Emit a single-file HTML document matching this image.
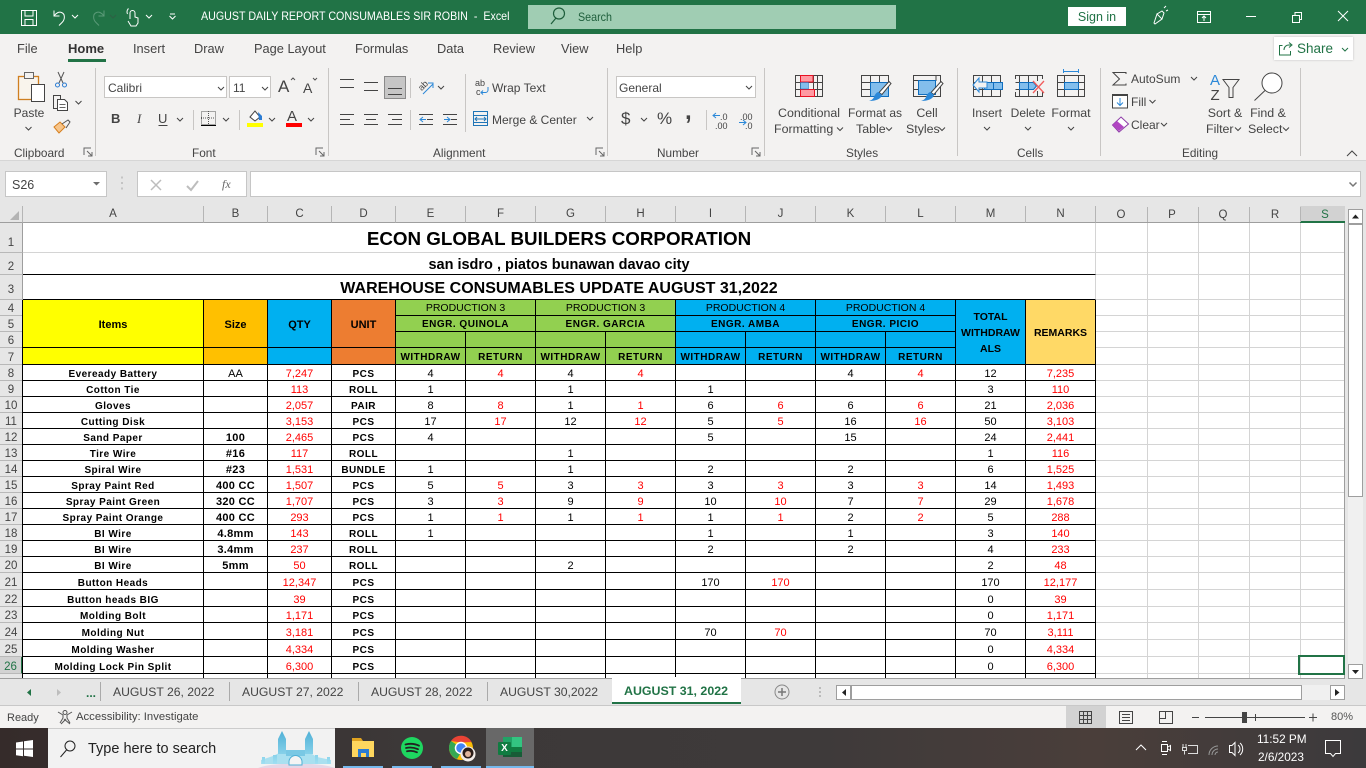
<!DOCTYPE html>
<html><head><meta charset="utf-8"><title>AUGUST DAILY REPORT CONSUMABLES SIR ROBIN - Excel</title>
<style>
html,body{margin:0;padding:0;width:1366px;height:768px;overflow:hidden;background:#fff;font-family:"Liberation Sans",sans-serif}
.p{position:absolute}
.t{position:absolute;white-space:pre;line-height:14px;font-size:12.5px;color:#444}
.c{transform:translateX(-50%)}
.w{color:#fff}
#grid{position:absolute;left:0;top:206px;width:1096px;height:472px;overflow:hidden}
table{border-collapse:separate;border-spacing:0;table-layout:fixed;width:1096px}
td,th{padding:0;box-sizing:border-box;text-align:center;overflow:visible;white-space:nowrap;line-height:11px}
td{border-right:1px solid #000;border-bottom:1px solid #000;font-size:11px;color:#000}
th{background:#e6e6e6;font-weight:normal;color:#444;font-size:11.5px;border-right:1px solid #9e9e9e;border-bottom:1px solid #b8b8b8}
.ch th{border-right:1px solid #b5b5b5;border-bottom:1px solid #9e9e9e}
.m td{border-right:1px solid #d4d4d4;font-weight:bold}
.m th{vertical-align:bottom}
.h td{font-weight:bold;font-size:10.5px;line-height:13px;padding-top:2px}
.h th,.v th{padding-top:4px}
.r7 td{padding-top:3px}
.e td{font-size:10px;letter-spacing:.5px}
.y{background:#ff0}.o{background:#ffc000}.b{background:#00b0f0}.u{background:#ed7d31}.g{background:#92d050}.k{background:#ffd966}
.d td,.d th{padding-top:4px}
.d td:nth-child(2),.d td:nth-child(5){font-weight:bold;font-size:10px;letter-spacing:.45px}
.d td:nth-child(4),.d td:nth-child(7),.d td:nth-child(9),.d td:nth-child(11),.d td:nth-child(13),.d td:nth-child(15){color:#f00}
.s td:nth-child(3){font-weight:bold;letter-spacing:.3px}
svg{position:absolute;left:0;top:0;pointer-events:none}
</style></head><body>
<!-- chrome backgrounds -->
<div class="p" style="left:0;top:0;width:1366px;height:34px;background:#217346"></div>
<div class="p" style="left:0;top:34px;width:1366px;height:126px;background:#f3f2f1"></div>
<div class="p" style="left:0;top:160px;width:1366px;height:46px;background:#e6e6e6;border-top:1px solid #d6d6d6;box-sizing:border-box"></div>
<div class="p" style="left:528px;top:5px;width:368px;height:24px;background:#a0cdb3"></div>
<div class="p" style="left:1068px;top:7px;width:58px;height:19px;background:#fff"></div>
<div class="p" style="left:1274px;top:37px;width:79px;height:23px;background:#fff;box-shadow:0 0 2px #bbb"></div>
<!-- ribbon inputs -->
<div class="p" style="left:104px;top:76px;width:123px;height:22px;background:#fff;border:1px solid #c8c6c4;box-sizing:border-box"></div>
<div class="p" style="left:229px;top:76px;width:42px;height:22px;background:#fff;border:1px solid #c8c6c4;box-sizing:border-box"></div>
<div class="p" style="left:616px;top:76px;width:140px;height:22px;background:#fff;border:1px solid #c8c6c4;box-sizing:border-box"></div>
<div class="p" style="left:384px;top:76px;width:22px;height:23px;background:#c6c6c6;border:1px solid #8a8a8a;box-sizing:border-box"></div>
<!-- formula bar -->
<div class="p" style="left:5px;top:171px;width:102px;height:26px;background:#fff;border:1px solid #c6c6c6;box-sizing:border-box"></div>
<div class="p" style="left:137px;top:171px;width:110px;height:26px;background:#fff;border:1px solid #c6c6c6;box-sizing:border-box"></div>
<div class="p" style="left:250px;top:171px;width:1111px;height:26px;background:#fff;border:1px solid #c6c6c6;box-sizing:border-box"></div>
<!-- sheet right -->
<div class="p" style="left:1096px;top:206px;width:249px;height:17px;background:#e6e6e6;border-bottom:1px solid #9e9e9e;box-sizing:border-box"></div>
<div class="p" style="left:1300px;top:206px;width:45px;height:17px;background:#d2d2d2;border-bottom:2px solid #217346;box-sizing:border-box"></div>
<div class="p" style="left:1345px;top:206px;width:21px;height:472px;background:#e6e6e6"></div>
<div class="p" style="left:1348px;top:224px;width:15px;height:440px;background:#f0f0f0"></div>
<div id="grid"><table>
<colgroup><col style="width:23px"><col style="width:181px"><col style="width:64px"><col style="width:64px"><col style="width:64px"><col span="10" style="width:70px"></colgroup>
<tr class="ch" style="height:17px"><th></th><th>A</th><th>B</th><th>C</th><th>D</th><th>E</th><th>F</th><th>G</th><th>H</th><th>I</th><th>J</th><th>K</th><th>L</th><th>M</th><th>N</th></tr>
<tr class="m" style="height:30px"><th style="padding-bottom:3px">1</th><td colspan="14" style="font-size:18.8px;line-height:22px;border-bottom-color:#d4d4d4;padding-top:3px">ECON GLOBAL BUILDERS CORPORATION</td></tr>
<tr class="m" style="height:22px"><th style="padding-bottom:1px">2</th><td colspan="14" style="font-size:14.5px;line-height:16px;padding-top:2px">san isdro , piatos bunawan davao city</td></tr>
<tr class="m" style="height:25px"><th style="padding-bottom:3px">3</th><td colspan="14" style="font-size:16px;line-height:18px;vertical-align:bottom;padding-bottom:1px">WAREHOUSE CONSUMABLES UPDATE AUGUST 31,2022</td></tr>
<tr class="h" style="height:16px"><th>4</th><td class="y" rowspan="3" style="font-size:11px;padding-top:4px">Items</td><td class="o" rowspan="3" style="font-size:11px;padding-top:4px">Size</td><td class="b" rowspan="3" style="font-size:11px;padding-top:4px">QTY</td><td class="u" rowspan="3" style="font-size:11px;padding-top:4px">UNIT</td><td class="g" colspan="2" style="font-weight:normal">PRODUCTION 3</td><td class="g" colspan="2" style="font-weight:normal">PRODUCTION 3</td><td class="b" colspan="2" style="font-weight:normal">PRODUCTION 4</td><td class="b" colspan="2" style="font-weight:normal">PRODUCTION 4</td><td class="b" rowspan="4" style="line-height:16px">TOTAL<br>WITHDRAW<br>ALS</td><td class="k" rowspan="4">REMARKS</td></tr>
<tr class="e h" style="height:16px"><th>5</th><td class="g" colspan="2">ENGR. QUINOLA</td><td class="g" colspan="2">ENGR. GARCIA</td><td class="b" colspan="2">ENGR. AMBA</td><td class="b" colspan="2">ENGR. PICIO</td></tr>
<tr class="v" style="height:16px"><th>6</th><td class="g"></td><td class="g"></td><td class="g"></td><td class="g"></td><td class="b"></td><td class="b"></td><td class="b"></td><td class="b"></td></tr>
<tr class="e h r7" style="height:17px"><th style="padding-top:5px">7</th><td class="y"></td><td class="o"></td><td class="b"></td><td class="u"></td><td class="g">WITHDRAW</td><td class="g">RETURN</td><td class="g">WITHDRAW</td><td class="g">RETURN</td><td class="b">WITHDRAW</td><td class="b">RETURN</td><td class="b">WITHDRAW</td><td class="b">RETURN</td></tr>
<tr class="d" style="height:16px"><th>8</th><td>Eveready Battery</td><td>AA</td><td>7,247</td><td>PCS</td><td>4</td><td>4</td><td>4</td><td>4</td><td></td><td></td><td>4</td><td>4</td><td>12</td><td>7,235</td></tr>
<tr class="d" style="height:16px"><th>9</th><td>Cotton Tie</td><td></td><td>113</td><td>ROLL</td><td>1</td><td></td><td>1</td><td></td><td>1</td><td></td><td></td><td></td><td>3</td><td>110</td></tr>
<tr class="d" style="height:16px"><th>10</th><td>Gloves</td><td></td><td>2,057</td><td>PAIR</td><td>8</td><td>8</td><td>1</td><td>1</td><td>6</td><td>6</td><td>6</td><td>6</td><td>21</td><td>2,036</td></tr>
<tr class="d" style="height:16px"><th>11</th><td>Cutting Disk</td><td></td><td>3,153</td><td>PCS</td><td>17</td><td>17</td><td>12</td><td>12</td><td>5</td><td>5</td><td>16</td><td>16</td><td>50</td><td>3,103</td></tr>
<tr class="d s" style="height:16px"><th>12</th><td>Sand Paper</td><td>100</td><td>2,465</td><td>PCS</td><td>4</td><td></td><td></td><td></td><td>5</td><td></td><td>15</td><td></td><td>24</td><td>2,441</td></tr>
<tr class="d s" style="height:16px"><th>13</th><td>Tire Wire</td><td>#16</td><td>117</td><td>ROLL</td><td></td><td></td><td>1</td><td></td><td></td><td></td><td></td><td></td><td>1</td><td>116</td></tr>
<tr class="d s" style="height:16px"><th>14</th><td>Spiral Wire</td><td>#23</td><td>1,531</td><td>BUNDLE</td><td>1</td><td></td><td>1</td><td></td><td>2</td><td></td><td>2</td><td></td><td>6</td><td>1,525</td></tr>
<tr class="d s" style="height:16px"><th>15</th><td>Spray Paint Red</td><td>400 CC</td><td>1,507</td><td>PCS</td><td>5</td><td>5</td><td>3</td><td>3</td><td>3</td><td>3</td><td>3</td><td>3</td><td>14</td><td>1,493</td></tr>
<tr class="d s" style="height:16px"><th>16</th><td>Spray Paint Green</td><td>320 CC</td><td>1,707</td><td>PCS</td><td>3</td><td>3</td><td>9</td><td>9</td><td>10</td><td>10</td><td>7</td><td>7</td><td>29</td><td>1,678</td></tr>
<tr class="d s" style="height:16px"><th>17</th><td>Spray Paint Orange</td><td>400 CC</td><td>293</td><td>PCS</td><td>1</td><td>1</td><td>1</td><td>1</td><td>1</td><td>1</td><td>2</td><td>2</td><td>5</td><td>288</td></tr>
<tr class="d s" style="height:16px"><th>18</th><td>BI Wire</td><td>4.8mm</td><td>143</td><td>ROLL</td><td>1</td><td></td><td></td><td></td><td>1</td><td></td><td>1</td><td></td><td>3</td><td>140</td></tr>
<tr class="d s" style="height:16px"><th>19</th><td>BI Wire</td><td>3.4mm</td><td>237</td><td>ROLL</td><td></td><td></td><td></td><td></td><td>2</td><td></td><td>2</td><td></td><td>4</td><td>233</td></tr>
<tr class="d s" style="height:16px"><th>20</th><td>BI Wire</td><td>5mm</td><td>50</td><td>ROLL</td><td></td><td></td><td>2</td><td></td><td></td><td></td><td></td><td></td><td>2</td><td>48</td></tr>
<tr class="d" style="height:17px"><th>21</th><td>Button Heads</td><td></td><td>12,347</td><td>PCS</td><td></td><td></td><td></td><td></td><td>170</td><td>170</td><td></td><td></td><td>170</td><td>12,177</td></tr>
<tr class="d" style="height:17px"><th>22</th><td>Button heads BIG</td><td></td><td>39</td><td>PCS</td><td></td><td></td><td></td><td></td><td></td><td></td><td></td><td></td><td>0</td><td>39</td></tr>
<tr class="d" style="height:16px"><th>23</th><td>Molding Bolt</td><td></td><td>1,171</td><td>PCS</td><td></td><td></td><td></td><td></td><td></td><td></td><td></td><td></td><td>0</td><td>1,171</td></tr>
<tr class="d" style="height:17px"><th>24</th><td>Molding Nut</td><td></td><td>3,181</td><td>PCS</td><td></td><td></td><td></td><td></td><td>70</td><td>70</td><td></td><td></td><td>70</td><td>3,111</td></tr>
<tr class="d" style="height:17px"><th>25</th><td>Molding Washer</td><td></td><td>4,334</td><td>PCS</td><td></td><td></td><td></td><td></td><td></td><td></td><td></td><td></td><td>0</td><td>4,334</td></tr>
<tr class="d" style="height:17px"><th style="background:#d2d2d2;color:#217346;border-right:2px solid #217346">26</th><td>Molding Lock Pin Split</td><td></td><td>6,300</td><td>PCS</td><td></td><td></td><td></td><td></td><td></td><td></td><td></td><td></td><td>0</td><td>6,300</td></tr>
<tr style="height:17px"><th></th><td></td><td></td><td></td><td></td><td></td><td></td><td></td><td></td><td></td><td></td><td></td><td></td><td></td><td></td></tr>
</table></div>
<!-- tab + status + taskbar backgrounds -->
<div class="p" style="left:0;top:678px;width:1366px;height:28px;background:#e6e6e6;border-top:1px solid #9e9e9e;box-sizing:border-box"></div>
<div class="p" style="left:1345px;top:678px;width:21px;height:1px;background:#e6e6e6"></div>
<div class="p" style="left:612px;top:677px;width:129px;height:27px;background:#fff;border-bottom:2px solid #217346;box-sizing:border-box"></div>
<div class="p" style="left:0;top:705px;width:1366px;height:23px;background:#f3f2f1;border-top:1px solid #c8c8c8;box-sizing:border-box"></div>
<div class="p" style="left:1066px;top:706px;width:40px;height:22px;background:#d2d2d2"></div>
<div class="p" style="left:851px;top:685px;width:479px;height:15px;background:#f0f0f0"></div>
<div class="p" style="left:851px;top:685px;width:451px;height:15px;background:#fff;border:1px solid #9e9e9e;box-sizing:border-box"></div>
<div class="p" style="left:836px;top:685px;width:15px;height:15px;background:#fff;border:1px solid #9e9e9e;box-sizing:border-box"></div>
<div class="p" style="left:1330px;top:685px;width:15px;height:15px;background:#fff;border:1px solid #9e9e9e;box-sizing:border-box"></div>
<div class="p" style="left:0;top:728px;width:1366px;height:40px;background:linear-gradient(90deg,#352b2a 0,#3c3838 30%,#3e3a3a 60%,#4a3e3a 80%,#3c3a3c 100%)"></div>
<div class="p" style="left:48px;top:728px;width:287px;height:40px;background:#f2f2f2;border-top:1px solid #ccc;box-sizing:border-box"></div>
<div class="p" style="left:486px;top:728px;width:48px;height:40px;background:#686868"></div>
<svg width="1366" height="768" viewBox="0 0 1366 768" fill="none">
<defs>
<path id="c" d="M0 0l3 3 3-3" stroke="#444"/>
<path id="cw" d="M0 0l3 3 3-3" stroke="#fff"/>
<path id="l" d="M0 7V0h7M3 3l5 5M8 4v4H4" stroke="#666"/>
<linearGradient id="tw" x1="0" y1="0" x2="0" y2="1"><stop offset="0" stop-color="#4fb0d6"/><stop offset="1" stop-color="#9fdff2"/></linearGradient>
</defs>
<!-- gridlines O-S -->
<path stroke="#d4d4d4" d="M1147.5 223V678M1198.5 223V678M1249.5 223V678M1300.5 223V678M1096 252.5H1344M1096 274.5H1344M1096 299.5H1344M1096 315.5H1344M1096 331.5H1344M1096 347.5H1344M1096 364.5H1344M1096 380.5H1344M1096 396.5H1344M1096 412.5H1344M1096 428.5H1344M1096 444.5H1344M1096 460.5H1344M1096 476.5H1344M1096 492.5H1344M1096 508.5H1344M1096 524.5H1344M1096 540.5H1344M1096 556.5H1344M1096 572.5H1344M1096 589.5H1344M1096 606.5H1344M1096 622.5H1344M1096 639.5H1344M1096 656.5H1344M1096 673.5H1344"/>
<path stroke="#b5b5b5" d="M1147.5 207V222M1198.5 207V222M1249.5 207V222M1300.5 207V222"/>
<path stroke="#9e9e9e" d="M1344.5 223V678"/>
<path stroke="#000" d="M22.5 300V678"/>
<rect x="1299" y="656" width="45" height="18" stroke="#217346" stroke-width="2"/>
<path fill="#b3b3b3" d="M19 211v9h-9z"/>
<!-- vscroll -->
<rect x="1348.5" y="209.5" width="14" height="14" fill="#fff" stroke="#9e9e9e"/><path fill="#222" d="M1352 218.5l3.5-4 3.5 4z"/>
<rect x="1348.5" y="224.5" width="14" height="272" fill="#fff" stroke="#9e9e9e"/>
<rect x="1348.5" y="664.5" width="14" height="14" fill="#fff" stroke="#9e9e9e"/><path fill="#222" d="M1352 670l3.5 4 3.5-4z"/>
<!-- hscroll arrows -->
<path fill="#222" d="M846 689l-4 3.5 4 3.5z"/><path fill="#222" d="M1335 689l4.5 3.5-4.5 3.5z"/>
<!-- title bar -->
<g stroke="#fff">
<path d="M21.5 10.5h15v15h-15zM25 10.5v5.500h8v-5.500M25 25.5v-6h8v6"/>
<path d="M54 10.5v5.500h5.500M54 16c2-3 5-4.500 7.500-3.500 4 1.500 3.500 7 .5 10l-3 3"/>
<path d="M130 19v-6a2.500 2.500 0 0 1 5 0v4l3 1v5l-2 3h-5l-3-5M127.5 14a5 5 0 0 1 1-5.500"/>
<path d="M170 14h5" />
<path d="M1154 23l3-9 5 5-7 5zM1157 14l5-3 2 2-2 6M1164 8l2-2M1166 11l2-1"/>
<path d="M1197.5 11.5h13v11h-13zM1197.5 14.5h13M1204 21v-5M1202 18l2-2 2 2"/>
<path d="M1246 16.5h10M1292.5 15.5h7v7h-7zM1295 15v-2.500h6.500v7H1300M1338 11l10 10M1348 11l-10 10"/>
</g>
<path stroke="#5b9a78" d="M104 10.5v5.500h-5.500M104 16c-2-3-5-4.500-7.500-3.500-4 1.500-3.500 7-.5 10l3 3"/>
<use href="#cw" x="72" y="15"/><use href="#c" x="110" y="15" style="opacity:.4"/><use href="#cw" x="146" y="15"/><use href="#cw" x="169.5" y="16"/>
<path stroke="#1e5e3b" stroke-width="1.2" d="M550 24l5-6M563.5 13.5a5.500 5.500 0 1 1-11 0 5.500 5.500 0 0 1 11 0z" transform="translate(1 0)"/>
<!-- home underline -->
<rect x="68" y="59" width="38" height="3" fill="#217346"/>
<!-- share -->
<path stroke="#217346" d="M1282.5 45.5h-3v9.500h11v-4M1284 50c0-3 2-5 5-5h2M1289 42.5l3 2.500-3 2.500"/>
<path d="M1342 48l3 3 3-3" stroke="#217346"/>
<!-- ribbon separators -->
<path stroke="#c8c6c4" d="M95.5 68V156M328.5 68V156M607.5 68V156M764.5 68V156M957.5 68V156M1100.5 68V156M1300.5 68V156M193.5 110V130M239.5 110V130M410.5 78V98M410.5 110V130M465.5 74V132M706.5 110V130"/>
<!-- launchers -->
<use href="#l" x="84" y="148"/><use href="#l" x="316" y="148"/><use href="#l" x="596" y="148"/><use href="#l" x="752" y="148"/>
<path stroke="#444" d="M1347 156l5-5 5 5"/>
<!-- clipboard -->
<rect x="18.5" y="76.5" width="20" height="23" fill="#f9f4ec" stroke="#cf7f20" stroke-width="1.3"/>
<rect x="24.5" y="72.5" width="9" height="6" fill="#f3f2f1" stroke="#666"/>
<rect x="31.5" y="84.5" width="13" height="17" fill="#fff" stroke="#444"/>
<use href="#c" x="25.5" y="127"/>
<path stroke="#555" d="M58 72l5 11M64 72l-5 11"/><circle cx="57.5" cy="85" r="2" stroke="#2b7cd3"/><circle cx="64.5" cy="85" r="2" stroke="#2b7cd3"/>
<path stroke="#444" fill="#f3f2f1" d="M53.5 95.5h7v13h-7z"/><path stroke="#444" fill="#fff" d="M57.5 99.5h7l3 3v8h-10z"/><path stroke="#666" d="M59.5 104.5h6M59.5 107.5h6"/>
<use href="#c" x="75.5" y="101"/>
<path stroke="#d67f1e" fill="#f7c58a" d="M54 127l6-5 5 5-6 6z"/><path stroke="#555" d="M62 124l6-4 2 2-4 6"/>
<!-- font -->
<use href="#c" x="218" y="87"/><use href="#c" x="262" y="87"/>
<path stroke="#555" d="M291 80l2-2 2 2M313 78l2 2 2-2"/>
<path stroke="#444" d="M158.5 125.5h9"/>
<use href="#c" x="177" y="118"/>
<rect x="201.5" y="111.5" width="14" height="13" stroke="#555" stroke-dasharray="1 1"/><path stroke="#555" stroke-dasharray="1 1" d="M208.5 111V125M201 118H216"/><path stroke="#000" d="M201 125.5h15"/>
<use href="#c" x="223" y="118"/>
<path stroke="#444" fill="#fff" d="M250 117l5-6 5 6-5 4z"/><path fill="#2b7cd3" d="M258 112l4 4v4h-3z"/><rect x="247" y="123" width="16" height="4" fill="#ff0"/>
<use href="#c" x="269" y="118"/>
<rect x="286" y="123" width="16" height="4" fill="#f00"/>
<use href="#c" x="308" y="118"/>
<!-- alignment -->
<path stroke="#444" d="M340 79.5h14M340 87.5h14M364 82.5h14M364 90.5h14M388 88.5h14M388 94.5h14M340 114.5h14M340 119.5h10M340 124.5h14M364 114.5h14M366 119.5h10M364 124.5h14M388 114.5h14M392 119.5h10M388 124.5h14M419 114.5h14M419 124.5h14M427 119.5h6M443 114.5h14M443 124.5h14M451 119.5h6"/>
<path stroke="#2b88d8" d="M426 119.5h-6M423 117l-3 2.500 3 2.500M444 119.5h6M447 117l3 2.500-3 2.500"/>
<text x="419" y="89" font-size="9" fill="#444" font-family="Liberation Sans" transform="rotate(-45 423 87)">ab</text>
<path stroke="#2b88d8" d="M423 94l10-10M428 83h5v5"/>
<use href="#c" x="438" y="86"/>
<text x="475" y="86" font-size="9" fill="#444" font-family="Liberation Sans">ab</text><text x="476" y="95" font-size="9" fill="#444" font-family="Liberation Sans">c</text>
<path stroke="#2b88d8" d="M488 87v3a2.500 2.500 0 0 1-2.500 2.500h-4M483 90.5l-2 2 2 2"/>
<rect x="473.5" y="111.5" width="14" height="14" stroke="#1f75b7"/><path stroke="#1f75b7" d="M473.5 115.5h14M473.5 122.5h14M475 119h11M477 117l-2 2 2 2M484 117l2 2-2 2"/>
<use href="#c" x="587" y="117"/>
<!-- number -->
<use href="#c" x="746" y="86"/><use href="#c" x="641" y="118"/>
<path stroke="#2b88d8" d="M720 115.5h-7M716 113l-3 2.500 3 2.500M746 122.5h-7M743 120l3 2.500-3 2.500"/>
<!-- conditional formatting -->
<g stroke="#444"><path d="M795.5 75.5h27v21h-27zM800.5 75v22M813.5 75v22M817.5 75v22M795 82.5h28M795 89.5h28"/></g>
<path fill="#ff9aa2" stroke="#e81123" d="M800.5 75.5h12.500v6.500h-12.500zM800.5 89.5h14v7h-14z"/><path fill="#83beec" stroke="#106ebe" d="M800.5 82.5h8v6.500h-8z" stroke-width=".5"/>
<!-- format as table -->
<path stroke="#444" d="M861.5 75.5h27v21h-27zM870.5 75v22M879.5 75v22M861 82.5h28M861 89.5h28"/>
<path fill="#83beec" stroke="#106ebe" d="M870.5 82.5h18v14h-18z"/>
<path fill="#fff" stroke="#444" d="M889 81.5l2 2-9 11-3-2z"/><path fill="#2b88d8" d="M878.5 92l3.500 3c-1 4-6 6-13 6 3-1 4-2 5-4 1-3 3-5 4.500-5z"/>
<!-- cell styles -->
<path stroke="#444" d="M913.5 75.5h27v21h-27zM913 80.5h5M913 89.5h5M936 75v6"/>
<path fill="#83beec" stroke="#106ebe" d="M918.5 80.5h17v14h-17z"/>
<path fill="#fff" stroke="#444" d="M941 81.5l2 2-9 11-3-2z"/><path fill="#2b88d8" d="M930.5 92l3.500 3c-1 4-6 6-13 6 3-1 4-2 5-4 1-3 3-5 4.500-5z"/>
<!-- insert -->
<path stroke="#444" d="M973.5 75.5h27v21h-27zM982.5 75v22M991.5 75v22M973 82.5h28M973 89.5h28"/>
<path fill="#83beec" stroke="#106ebe" d="M984.5 82.5h18v7h-18zM993.5 82.5v7"/>
<path stroke="#2b88d8" fill="#f3f2f1" d="M979 78l-6 7 6 7v-4h8v-6h-8z"/>
<!-- delete -->
<path stroke="#444" d="M1015.5 79v-3.500h27v3.500M1015.5 92v4.500h27V92M1019.5 75v22M1028.5 75v7M1028.5 90v7M1037.5 75v6M1037.5 91v6M1015.5 82.5h4M1015.5 89.5h4"/>
<path fill="#83beec" stroke="#106ebe" d="M1019.5 82.5h14l3 3.500-3 3.500h-14zM1028.5 82.5v7"/>
<path stroke="#f25c5c" stroke-width="1.3" d="M1033 81l11 12M1044 81l-11 12"/>
<!-- format -->
<path stroke="#2b88d8" d="M1063.5 69v4M1078.5 69v4M1063.5 71.5h15"/>
<path stroke="#444" d="M1057.5 75.5h27v21h-27zM1064.5 75v22M1078.5 75v22M1057 82.5h28M1057 89.5h28"/>
<path fill="#83beec" stroke="#106ebe" d="M1064.5 82.5h14v7h-14z"/>
<use href="#c" x="837" y="127.5"/><use href="#c" x="886" y="127.5"/><use href="#c" x="939" y="127.5"/>
<use href="#c" x="984" y="127"/><use href="#c" x="1025" y="127"/><use href="#c" x="1068" y="127"/>
<!-- editing -->
<path stroke="#444" d="M1126 74v-1.500h-13l6.500 6.500-6.500 6h13v-1.500"/>
<use href="#c" x="1191" y="77"/>
<rect x="1112.5" y="94.5" width="15" height="13.5" fill="#fff" stroke="#444"/><path stroke="#444" stroke-width="2" d="M1112 95h16"/><path stroke="#2b88d8" d="M1120 98v7M1117 102.5l3 3 3-3"/>
<use href="#c" x="1149.5" y="100"/>
<path fill="#fff" stroke="#8e3ca8" d="M1121 117l7.500 7-9.500 8-6.500-7z"/><path fill="#b146c2" d="M1117 121l7 6-5 4-6.500-6z"/>
<use href="#c" x="1161" y="123"/>
<text x="1210" y="85" font-size="15" fill="#2b88d8" font-family="Liberation Sans">A</text><text x="1210.5" y="100" font-size="15" fill="#444" font-family="Liberation Sans">Z</text>
<path stroke="#444" d="M1223 79.5h16l-6 8v10h-4v-10z"/>
<use href="#c" x="1235" y="127.5"/>
<circle cx="1272" cy="83" r="10" fill="#fff" stroke="#444"/><path stroke="#444" d="M1265 90.5l-10.500 10"/>
<use href="#c" x="1283" y="127.5"/>
<!-- formula -->
<path fill="#6d6d6d" d="M93 182h7l-3.500 3.500z"/>
<path stroke="#c4c4c4" stroke-width="2" d="M122 176.5v2M122 182v2M122 187.5v2"/>
<path stroke="#bdbdbd" stroke-width="1.5" d="M151 180l10 10M161 180l-10 10"/>
<path stroke="#bdbdbd" stroke-width="2" d="M187 186l4 4 7-9"/>
<path stroke="#777" stroke-width="1.5" d="M1349.5 182.5l3.500 3.500 3.500-3.500"/>
<!-- tabs nav -->
<path fill="#217346" d="M31 689l-4 3.500 4 3.500z"/><path fill="#bdbdbd" d="M57 689l4 3.500-4 3.500z"/>
<path stroke="#aaa" d="M100.5 682v19M229.5 682v19M358.5 682v19M487.5 682v19"/>
<circle cx="782" cy="692" r="7" fill="#e6e6e6" stroke="#888"/><path stroke="#777" stroke-width="1.5" d="M778 692h8M782 688v8"/>
<path stroke="#bbb" stroke-width="2" d="M820 687v2M820 691v2M820 695v2"/>
<!-- status -->
<circle cx="65" cy="712.5" r="2" stroke="#555"/><path stroke="#555" d="M58 712l5 3v3l-3 5M72 712l-5 3v3l3 5M64 719l6 5M66 719l-5 5"/>
<path stroke="#444" d="M1079.5 711.5h12v12h-12zM1083.5 711.5v12M1087.5 711.5v12M1079.5 715.5h12M1079.5 719.5h12"/>
<path stroke="#444" d="M1119.5 711.5h13v12h-13zM1122 714.5h8M1122 717.5h8M1122 720.5h8"/>
<path stroke="#444" d="M1159.5 711.5h13v12h-13zM1159.5 718.5h6v-7"/>
<path stroke="#444" d="M1192 717.5h7M1205 717.5h100M1255.5 714v7M1309 717.5h8M1313 713.5v8"/>
<rect x="1242" y="712" width="5" height="11" fill="#444"/>
<!-- taskbar -->
<path fill="#fff" d="M16 742.5l7-1v7h-7zM24 741.3l9-1.300v8.500h-9zM16 749.5h7v6.800l-7-1zM24 749.5h9v7.500l-9-1.200z"/>
<circle cx="70" cy="746" r="5" stroke="#222"/><path stroke="#222" d="M66.5 750l-6 7"/>
<!-- castle -->
<path fill="#e6d6e6" d="M258 768c14-6 62-6 77 0z"/>
<path fill="#a9e0f0" d="M261 764h70v-4l-14-3-10-6h-24l-10 5-12 4z"/>
<path fill="url(#tw)" d="M278 754v-15l4-8 4 8v15zM305 754v-15l4-8 4 8v15zM262 764v-7h3v7zM273 764v-9h4v9zM315 764v-9h3v9zM327 764v-7h3v7z"/>
<path fill="#79c8e4" d="M286 750h19v6h-19z"/>
<path fill="#f4f4f4" stroke="#4fb0d6" d="M289 765v-3a6.500 6.500 0 0 1 13 0v3z"/>
<!-- explorer -->
<path fill="#e0a320" d="M352 738h9l2 3h-11z"/><rect x="352" y="741" width="22" height="16" fill="#ffd75e"/><rect x="358" y="749" width="11" height="8" fill="#2b7cd3"/><rect x="361" y="753" width="5" height="4" fill="#ffd75e"/>
<circle cx="412" cy="748" r="11" fill="#1ed760"/><path stroke="#222" stroke-linecap="round" stroke-width="1.8" d="M405.5 744.5c4-1 9-1 13.500 1.200M406 748c4-1 8-.6 12 1.200M407 751.3c3-.7 7-.4 10 1"/>
<circle cx="461" cy="748" r="12" fill="#fbbc05"/><path fill="#ea4335" d="M451 741a12 12 0 0 1 20.500 1l-10.500 .5z"/><path fill="#34a853" d="M451 741a12 12 0 0 0 6 18l6-10z"/><circle cx="461" cy="748" r="5.5" fill="#4285f4" stroke="#fff" stroke-width="1.5"/>
<circle cx="468" cy="754" r="7.5" fill="#f2ece8"/><circle cx="468" cy="753" r="5.5" fill="#2b1d18"/><circle cx="468" cy="754" r="3" fill="#e0b59c"/>
<path fill="#21a366" d="M503 737h19v10h-19z"/><path fill="#33c481" d="M512 737h10v10h-10z"/><path fill="#107c41" d="M503 747h19v5h-19z"/><path fill="#185c37" d="M503 752h19v5h-19z"/>
<rect x="498" y="742" width="13" height="13" rx="1" fill="#107c41"/>
<path fill="#76b9ed" d="M343 766h40v2h-40zM392 766h40v2h-40zM441 766h40v2h-40zM486 766h48v2h-48z"/>
<!-- tray -->
<g stroke="#fff">
<path d="M1136 750l5-5 5 5"/>
<path d="M1161.5 744.5h6v7h-6zM1168 747l2.500-1.500v5L1168 749M1162 741.5h5M1162 754.5h5"/>
<path d="M1183 744v3M1186 744v3M1182.5 747.5h4v3h-4zM1184.5 750.5v4M1188 745.5h9.500v8h-9.500" stroke="#ddd"/>
<path d="M1209 755a9 9 0 0 1 9-9M1212 755a6 6 0 0 1 6-6M1215 755a3 3 0 0 1 3-3" stroke="#999"/>
<path d="M1229.5 745.5h2.500l3-3v13l-3-3h-2.500zM1238 745a5 5 0 0 1 0 8M1240 743a8 8 0 0 1 0 12"/>
<path d="M1325.5 740.5h15v13h-5l-2.500 3-2.500-3h-5z"/>
</g>
</svg>
<!-- title bar text -->
<span class="t w" style="left:201px;top:10px;font-size:11.6px;transform:scaleX(.922);transform-origin:0 0">AUGUST DAILY REPORT CONSUMABLES SIR ROBIN  -  Excel</span>
<span class="t" style="left:578px;top:10px;color:#1e5e3b;font-size:12px;transform:scaleX(.895);transform-origin:0 0">Search</span>
<span class="t c" style="left:1097px;top:10px;color:#217346;font-size:12.5px">Sign in</span>
<span class="t" style="left:1297px;top:42px;color:#217346;font-size:13.5px;font-weight:500">Share</span>
<!-- tabs -->
<span class="t" style="left:17px;top:42px;font-size:12.8px">File</span>
<span class="t" style="left:68px;top:42px;font-size:13px;font-weight:bold;color:#333">Home</span>
<span class="t" style="left:133px;top:42px;font-size:12.8px">Insert</span>
<span class="t" style="left:194px;top:42px;font-size:12.8px">Draw</span>
<span class="t" style="left:254px;top:42px;font-size:12.8px">Page Layout</span>
<span class="t" style="left:355px;top:42px;font-size:12.8px">Formulas</span>
<span class="t" style="left:437px;top:42px;font-size:12.8px">Data</span>
<span class="t" style="left:493px;top:42px;font-size:12.8px">Review</span>
<span class="t" style="left:561px;top:42px;font-size:12.8px">View</span>
<span class="t" style="left:616px;top:42px;font-size:12.8px">Help</span>
<!-- ribbon text -->
<span class="t c" style="left:29px;top:106px;font-size:12px">Paste</span>
<span class="t" style="left:108px;top:81px;font-size:12px">Calibri</span>
<span class="t" style="left:233px;top:81px;font-size:12px">11</span>
<span class="t" style="left:278px;top:80px;font-size:17px">A</span>
<span class="t" style="left:303px;top:81px;font-size:14px">A</span>
<span class="t" style="left:111px;top:112px;font-size:13px;font-weight:bold">B</span>
<span class="t" style="left:137px;top:112px;font-size:13px;font-style:italic;font-family:'Liberation Serif',serif">I</span>
<span class="t" style="left:158px;top:112px;font-size:13px">U</span>
<span class="t" style="left:287px;top:110px;font-size:15px">A</span>
<span class="t" style="left:492px;top:81px;font-size:12px">Wrap Text</span>
<span class="t" style="left:492px;top:113px;font-size:12px">Merge &amp; Center</span>
<span class="t" style="left:619px;top:81px;font-size:12px">General</span>
<span class="t" style="left:621px;top:112px;font-size:17px">$</span>
<span class="t" style="left:657px;top:112px;font-size:17px">%</span>
<span class="t" style="left:685px;top:105px;font-size:24px;font-weight:bold">,</span>
<span class="t" style="left:715px;top:113px;font-size:9px;line-height:9px;text-align:right">  .0<br>.00</span>
<span class="t" style="left:740px;top:113px;font-size:9px;line-height:9px">.00<br>  .0</span>
<span class="t c" style="left:809px;top:106px;font-size:12.4px">Conditional</span>
<span class="t" style="left:774px;top:122px;font-size:12.4px">Formatting</span>
<span class="t c" style="left:875px;top:106px;font-size:12px">Format as</span>
<span class="t" style="left:856px;top:122px;font-size:12.4px">Table</span>
<span class="t c" style="left:927px;top:106px;font-size:12.4px">Cell</span>
<span class="t" style="left:906px;top:122px;font-size:12.4px">Styles</span>
<span class="t c" style="left:987px;top:106px;font-size:12px">Insert</span>
<span class="t c" style="left:1028px;top:106px;font-size:12px">Delete</span>
<span class="t c" style="left:1071px;top:106px;font-size:12.4px">Format</span>
<span class="t" style="left:1131px;top:72px;font-size:12px">AutoSum</span>
<span class="t" style="left:1131px;top:95px;font-size:12px">Fill</span>
<span class="t" style="left:1131px;top:118px;font-size:12px">Clear</span>
<span class="t c" style="left:1225px;top:106px;font-size:12.4px">Sort &amp;</span>
<span class="t" style="left:1206px;top:122px;font-size:12.4px">Filter</span>
<span class="t c" style="left:1268px;top:106px;font-size:12.4px">Find &amp;</span>
<span class="t" style="left:1248px;top:122px;font-size:12.4px">Select</span>
<span class="t" style="left:14px;top:146px;font-size:11.8px">Clipboard</span>
<span class="t" style="left:192px;top:146px;font-size:11.8px">Font</span>
<span class="t" style="left:433px;top:146px;font-size:11.8px">Alignment</span>
<span class="t" style="left:657px;top:146px;font-size:11.8px">Number</span>
<span class="t" style="left:846px;top:146px;font-size:11.8px">Styles</span>
<span class="t" style="left:1017px;top:146px;font-size:11.8px">Cells</span>
<span class="t" style="left:1182px;top:146px;font-size:11.8px">Editing</span>
<!-- formula -->
<span class="t" style="left:12px;top:178px;font-size:12.5px">S26</span>
<span class="t" style="left:222px;top:177px;font-size:12px;font-style:italic;font-family:'Liberation Serif',serif;color:#666">fx</span>
<!-- right col headers -->
<span class="t c" style="left:1121px;top:208px;font-size:11.5px">O</span>
<span class="t c" style="left:1172px;top:208px;font-size:11.5px">P</span>
<span class="t c" style="left:1223px;top:208px;font-size:11.5px">Q</span>
<span class="t c" style="left:1275px;top:208px;font-size:11.5px">R</span>
<span class="t c" style="left:1325px;top:208px;font-size:11.5px;color:#217346">S</span>
<!-- sheet tabs -->
<span class="t" style="left:86px;top:686px;font-size:12px;font-weight:bold;color:#217346">...</span>
<span class="t" style="left:113px;top:685px;font-size:12.2px">AUGUST 26, 2022</span>
<span class="t" style="left:242px;top:685px;font-size:12.2px">AUGUST 27, 2022</span>
<span class="t" style="left:371px;top:685px;font-size:12.2px">AUGUST 28, 2022</span>
<span class="t" style="left:500px;top:685px;font-size:12.2px">AUGUST 30,2022</span>
<span class="t" style="left:624px;top:684px;font-size:12.4px;font-weight:bold;color:#217346">AUGUST 31, 2022</span>
<!-- status -->
<span class="t" style="left:7px;top:711px;font-size:11px">Ready</span>
<span class="t" style="left:76px;top:710px;font-size:11.3px">Accessibility: Investigate</span>
<span class="t" style="left:1331px;top:710px;font-size:11px;color:#555">80%</span>
<!-- taskbar -->
<span class="t" style="left:88px;top:741px;font-size:14.5px;line-height:16px;color:#222">Type here to search</span>
<span class="t w" style="left:1257px;top:732px;font-size:11.8px">11:52 PM</span>
<span class="t w" style="left:1258px;top:750px;font-size:11.8px">2/6/2023</span>
<span class="t w" style="left:504.5px;top:741.5px;font-size:10px;font-weight:bold;transform:translateX(-50%);line-height:14px">X</span>
</body></html>
